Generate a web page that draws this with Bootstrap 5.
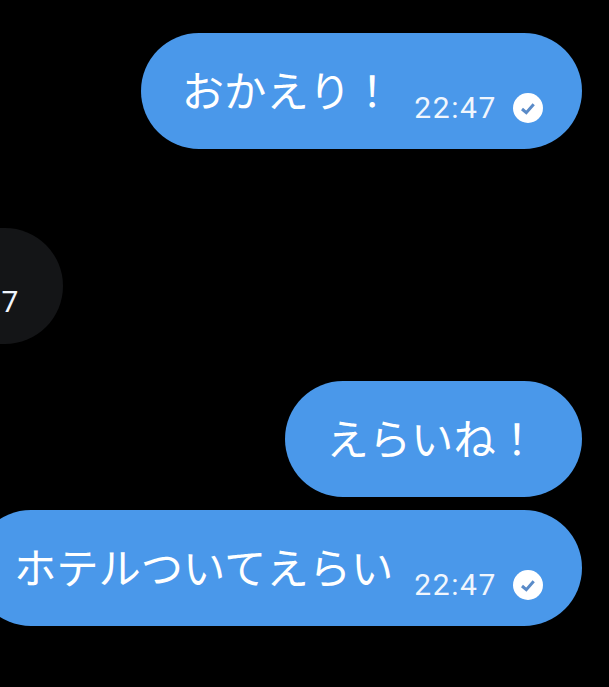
<!DOCTYPE html>
<html lang="ja">
<head>
    <meta charset="UTF-8">
    <title>Chat</title>
    <meta name="viewport" content="width=device-width, initial-scale=1">
    <link href="https://cdn.jsdelivr.net/npm/bootstrap@5.3.3/dist/css/bootstrap.min.css" rel="stylesheet">
    <style>
        html, body {
            background: #000;
            height: 100%;
            overflow: hidden;
        }
        .chat-wrap {
            width: 609px;
            height: 687px;
            padding: 33px 27px 0 0;
            overflow: hidden;
        }
        .bubble {
            height: 116px;
            border-radius: 58px;
            flex-shrink: 0;
            white-space: nowrap;
        }
        .bubble-me {
            background: #4a98ea;
            color: #fff;
        }
        .bubble-other {
            background: #141517;
            color: #fff;
            width: 126px;
            margin-left: -63px;
            margin-top: 79px;
            margin-bottom: 37px;
        }
        .msg-text {
            font-family: "Noto Sans CJK JP", sans-serif;
            font-size: 42.3px;
            line-height: 1;
            margin-bottom: 4px;
        }
        .msg-time {
            font-family: Roboto, "Liberation Sans", sans-serif;
            font-size: 30px;
            letter-spacing: 1.6px;
            line-height: 1;
            color: #f1f6fd;
        }
        .tick {
            width: 30px;
            height: 30px;
            display: block;
        }
        .b-first, .b-long { padding: 0 39px 0 41px; }
        .b-short { padding: 0 44px 0 42px; margin-bottom: 13px; }
        .time-row { margin-top: 33px; margin-left: 21px; }
        .other-time { padding-top: 59px; padding-right: 43px; }
    </style>
</head>
<body>
    <div class="chat-wrap d-flex flex-column align-items-end">
        <div class="bubble bubble-me b-first d-flex align-items-center">
            <span class="msg-text">おかえり！</span>
            <div class="time-row d-flex align-items-center gap-3">
                <span class="msg-time">22:47</span>
                <svg class="tick" viewBox="0 0 30 30"><circle cx="15" cy="15" r="15" fill="#fff"/><path d="M9 16l4.3 3.7 7.4-8.4" fill="none" stroke="#5a8bc8" stroke-width="3"/></svg>
            </div>
        </div>

        <div class="bubble bubble-other align-self-start d-flex justify-content-end">
            <span class="msg-time other-time">47</span>
        </div>

        <div class="bubble bubble-me b-short d-flex align-items-center">
            <span class="msg-text">えらいね！</span>
        </div>

        <div class="bubble bubble-me b-long d-flex align-items-center">
            <span class="msg-text">ホテルついてえらい</span>
            <div class="time-row d-flex align-items-center gap-3">
                <span class="msg-time">22:47</span>
                <svg class="tick" viewBox="0 0 30 30"><circle cx="15" cy="15" r="15" fill="#fff"/><path d="M9 16l4.3 3.7 7.4-8.4" fill="none" stroke="#5a8bc8" stroke-width="3"/></svg>
            </div>
        </div>
    </div>
    <script src="https://cdn.jsdelivr.net/npm/bootstrap@5.3.3/dist/js/bootstrap.bundle.min.js"></script>
</body>
</html>
